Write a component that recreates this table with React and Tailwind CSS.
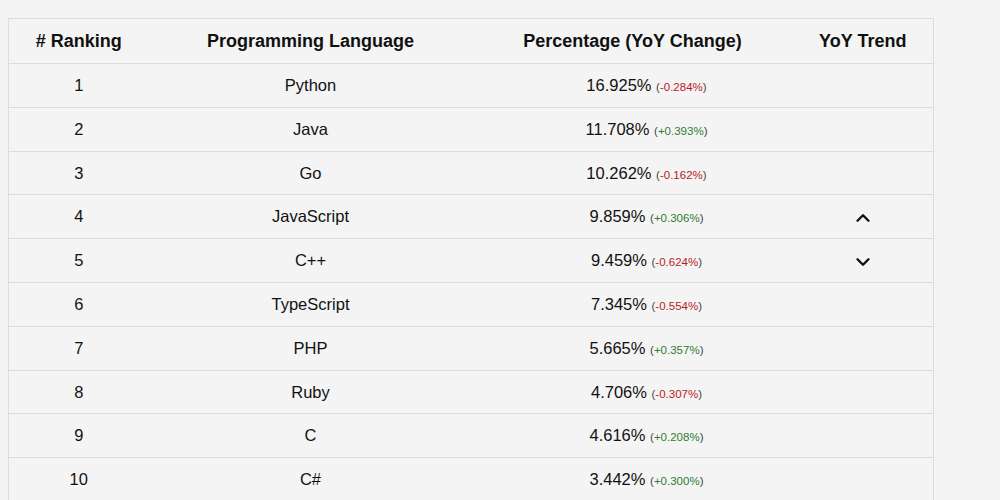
import React from 'react';
import { ChevronUp, ChevronDown } from 'lucide-react';

const rows = [
  { rank: 1, lang: 'Python', pct: '16.925%', change: '-0.284%' },
  { rank: 2, lang: 'Java', pct: '11.708%', change: '+0.393%' },
  { rank: 3, lang: 'Go', pct: '10.262%', change: '-0.162%' },
  { rank: 4, lang: 'JavaScript', pct: '9.859%', change: '+0.306%', trend: 'up' },
  { rank: 5, lang: 'C++', pct: '9.459%', change: '-0.624%', trend: 'down' },
  { rank: 6, lang: 'TypeScript', pct: '7.345%', change: '-0.554%' },
  { rank: 7, lang: 'PHP', pct: '5.665%', change: '+0.357%' },
  { rank: 8, lang: 'Ruby', pct: '4.706%', change: '-0.307%' },
  { rank: 9, lang: 'C', pct: '4.616%', change: '+0.208%' },
  { rank: 10, lang: 'C#', pct: '3.442%', change: '+0.300%' },
];

const App = () => {
  return (
    <div className="min-h-screen bg-[#f4f4f4] pt-[18px] pl-2 font-['Liberation_Sans',Arial,sans-serif] text-[#111]">
      <table className="w-[925px] border-collapse table-fixed">
        <thead>
          <tr className="h-[45px] border border-[#dcdcdc]">
            <th className="w-[140px] text-[18px] font-bold">
              # Ranking
            </th>
            <th className="w-[324px] text-[18px] font-bold">Programming Language</th>
            <th className="w-[320px] text-[18px] font-bold">Percentage (YoY Change)</th>
            <th className="w-[141px] text-[18px] font-bold">YoY Trend</th>
          </tr>
        </thead>
        <tbody>
          {rows.map((r) => (
            <tr key={r.rank} className="h-[43.8px] border border-[#dcdcdc] text-[16.5px]">
              <td className="text-center">{r.rank}</td>
              <td className="text-center">{r.lang}</td>
              <td className="text-center pl-[28px]">
                {r.pct}{' '}
                <span className="text-[11.5px] text-[#444]">
                  (
                  <span className={r.change.startsWith('+') ? 'text-[#2e7d32]' : 'text-[#b71c1c]'}>
                    {r.change}
                  </span>
                  )
                </span>
              </td>
              <td className="text-center">
                {r.trend === 'up' && <ChevronUp size={22} strokeWidth={2.6} className="inline-block" />}
                {r.trend === 'down' && <ChevronDown size={22} strokeWidth={2.6} className="inline-block" />}
              </td>
            </tr>
          ))}
        </tbody>
      </table>
    </div>
  );
};

export default App;
